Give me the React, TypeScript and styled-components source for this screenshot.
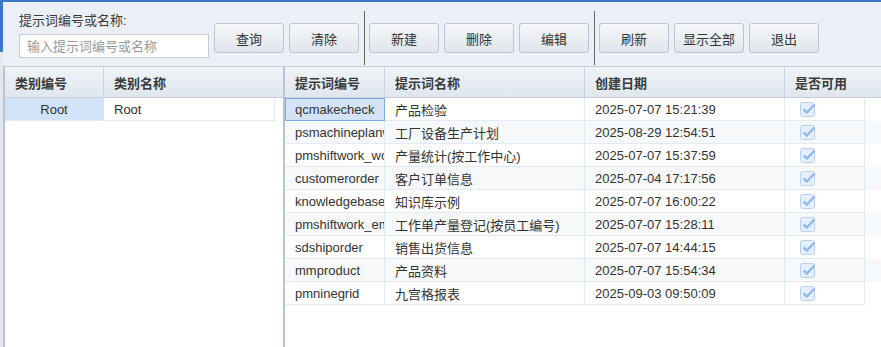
import React from "react";
import styled, { createGlobalStyle } from "styled-components";

const GlobalStyle = createGlobalStyle`
    html, body {
        margin: 0;
        padding: 0;
        height: 100%;
        background: #ffffff;
    }
    #root {
        height: 100%;
    }
    * {
        box-sizing: border-box;
    }
`;

const Frame = styled.div`
    height: 100vh;
    display: flex;
    flex-direction: column;
    padding-left: 3px;
    border-top: 2px solid #3b78c2;
    background: linear-gradient(to bottom, #3b78c2 0 50px, #e2e7ed 50px);
    font-family: "Liberation Sans", "Noto Sans CJK SC", sans-serif;
    font-size: 13px;
    color: #333;
    overflow: hidden;
`;

const Toolbar = styled.div`
    height: 65px;
    flex: none;
    display: flex;
    align-items: flex-start;
    padding-left: 16px;
    background: #eaf0f6;
    border-bottom: 1px solid #c3ccd7;
`;

const SearchField = styled.div`
    display: flex;
    flex-direction: column;
    gap: 4px;
    margin-top: 10px;
`;

const Label = styled.label`
    line-height: 18px;
    color: #3a3a3a;
`;

const SearchInput = styled.input`
    width: 190px;
    height: 24px;
    padding: 0 7px;
    border: 1px solid #c6ccd3;
    background: #fff;
    font-family: inherit;
    font-size: 13px;
    color: #333;
    outline: none;
    &::placeholder {
        color: #9a9a9a;
    }
`;

const ButtonGroup = styled.div<{ $lead?: number }>`
    display: flex;
    gap: 5px;
    margin-top: 21px;
    margin-left: ${(p) => p.$lead ?? 0}px;
`;

const ToolButton = styled.button`
    width: 70px;
    height: 30px;
    padding: 0;
    border: 1px solid #bcc6d2;
    border-radius: 3px;
    background: linear-gradient(to bottom, #f6f8fa, #dfe5ec);
    font-family: inherit;
    font-size: 13px;
    color: #333;
`;

const Separator = styled.div`
    width: 1px;
    height: 54px;
    margin: 9px 4px 0 5px;
    background: #666;
`;

const Body = styled.div`
    flex: 1;
    display: flex;
    min-height: 0;
`;

const LeftPanel = styled.div`
    width: 282px;
    flex: none;
    background: #fff;
    border-left: 2px solid #b9c4d2;
    border-right: 2px solid #b9c4d2;
`;

const RightPanel = styled.div`
    flex: 1;
    background: #fff;
`;

const HeaderRow = styled.div`
    display: flex;
    height: 31px;
    background: linear-gradient(to bottom, #f0f4f8, #dfe6ee);
    border-bottom: 1px solid #c6cfd9;
`;

const HeaderCell = styled.div<{ $w?: number }>`
    ${(p) => (p.$w ? `width: ${p.$w}px; flex: none;` : "flex: 1;")}
    display: flex;
    align-items: center;
    padding-left: 10px;
    font-weight: bold;
    color: #3a3a3a;
    border-right: 1px solid #c9d2dc;
    &:last-child {
        border-right: none;
    }
`;

const Row = styled.div<{ $alt?: boolean }>`
    display: flex;
    height: 23px;
    background: ${(p) => (p.$alt ? "#f7f8f9" : "#fff")};
`;

const Cell = styled.div<{ $w: number; $center?: boolean; $selected?: boolean }>`
    width: ${(p) => p.$w}px;
    flex: none;
    display: flex;
    align-items: center;
    justify-content: ${(p) => (p.$center ? "center" : "flex-start")};
    padding-left: ${(p) => (p.$center ? 0 : 10)}px;
    white-space: nowrap;
    overflow: hidden;
    color: #333;
    border-right: 1px solid #e2eaf3;
    border-bottom: 1px solid #e2eaf3;
    ${(p) =>
        p.$selected
            ? `background: #d4e3f8; border: 1px solid #7faadd; padding-left: ${p.$center ? 0 : 9}px;`
            : ""}
`;

const CategorySelected = styled(Cell)`
    background: #d2e2f9;
    border-right-color: #d2e2f9;
`;

const CheckWrap = styled.span`
    display: flex;
    margin-left: 5px;
`;

const CheckIcon = () => (
    <svg width="16" height="16" viewBox="0 0 16 16">
        <rect x="0.5" y="1.5" width="14" height="14" rx="2" fill="#e6f0fc" stroke="#b9d2f1" />
        <path d="M3.5 8.5 L6.8 11.5 L14.5 3.5" fill="none" stroke="#93bbea" strokeWidth="2.4" />
    </svg>
);

const prompts = [
    ["qcmakecheck", "产品检验", "2025-07-07 15:21:39"],
    ["psmachineplanwork", "工厂设备生产计划", "2025-08-29 12:54:51"],
    ["pmshiftwork_wc", "产量统计(按工作中心)", "2025-07-07 15:37:59"],
    ["customerorder", "客户订单信息", "2025-07-04 17:17:56"],
    ["knowledgebase", "知识库示例", "2025-07-07 16:00:22"],
    ["pmshiftwork_emp", "工作单产量登记(按员工编号)", "2025-07-07 15:28:11"],
    ["sdshiporder", "销售出货信息", "2025-07-07 14:44:15"],
    ["mmproduct", "产品资料", "2025-07-07 15:54:34"],
    ["pmninegrid", "九宫格报表", "2025-09-03 09:50:09"],
];

export default function App() {
    return (
        <Frame>
            <GlobalStyle />
            <Toolbar>
                <SearchField>
                    <Label>提示词编号或名称:</Label>
                    <SearchInput placeholder="输入提示词编号或名称" />
                </SearchField>
                <ButtonGroup $lead={5}>
                    <ToolButton>查询</ToolButton>
                    <ToolButton>清除</ToolButton>
                </ButtonGroup>
                <Separator />
                <ButtonGroup>
                    <ToolButton>新建</ToolButton>
                    <ToolButton>删除</ToolButton>
                    <ToolButton>编辑</ToolButton>
                </ButtonGroup>
                <Separator />
                <ButtonGroup>
                    <ToolButton>刷新</ToolButton>
                    <ToolButton>显示全部</ToolButton>
                    <ToolButton>退出</ToolButton>
                </ButtonGroup>
            </Toolbar>
            <Body>
                <LeftPanel>
                    <HeaderRow>
                        <HeaderCell $w={99}>类别编号</HeaderCell>
                        <HeaderCell>类别名称</HeaderCell>
                    </HeaderRow>
                    <Row>
                        <CategorySelected $w={99} $center>
                            Root
                        </CategorySelected>
                        <Cell $w={171}>Root</Cell>
                    </Row>
                </LeftPanel>
                <RightPanel>
                    <HeaderRow>
                        <HeaderCell $w={100}>提示词编号</HeaderCell>
                        <HeaderCell $w={200}>提示词名称</HeaderCell>
                        <HeaderCell $w={200}>创建日期</HeaderCell>
                        <HeaderCell>是否可用</HeaderCell>
                    </HeaderRow>
                    {prompts.map(([code, name, date], i) => (
                        <Row key={code} $alt={i % 2 === 1}>
                            <Cell $w={100} $selected={i === 0}>
                                {code}
                            </Cell>
                            <Cell $w={200}>{name}</Cell>
                            <Cell $w={200}>{date}</Cell>
                            <Cell $w={80}>
                                <CheckWrap>
                                    <CheckIcon />
                                </CheckWrap>
                            </Cell>
                        </Row>
                    ))}
                </RightPanel>
            </Body>
        </Frame>
    );
}
